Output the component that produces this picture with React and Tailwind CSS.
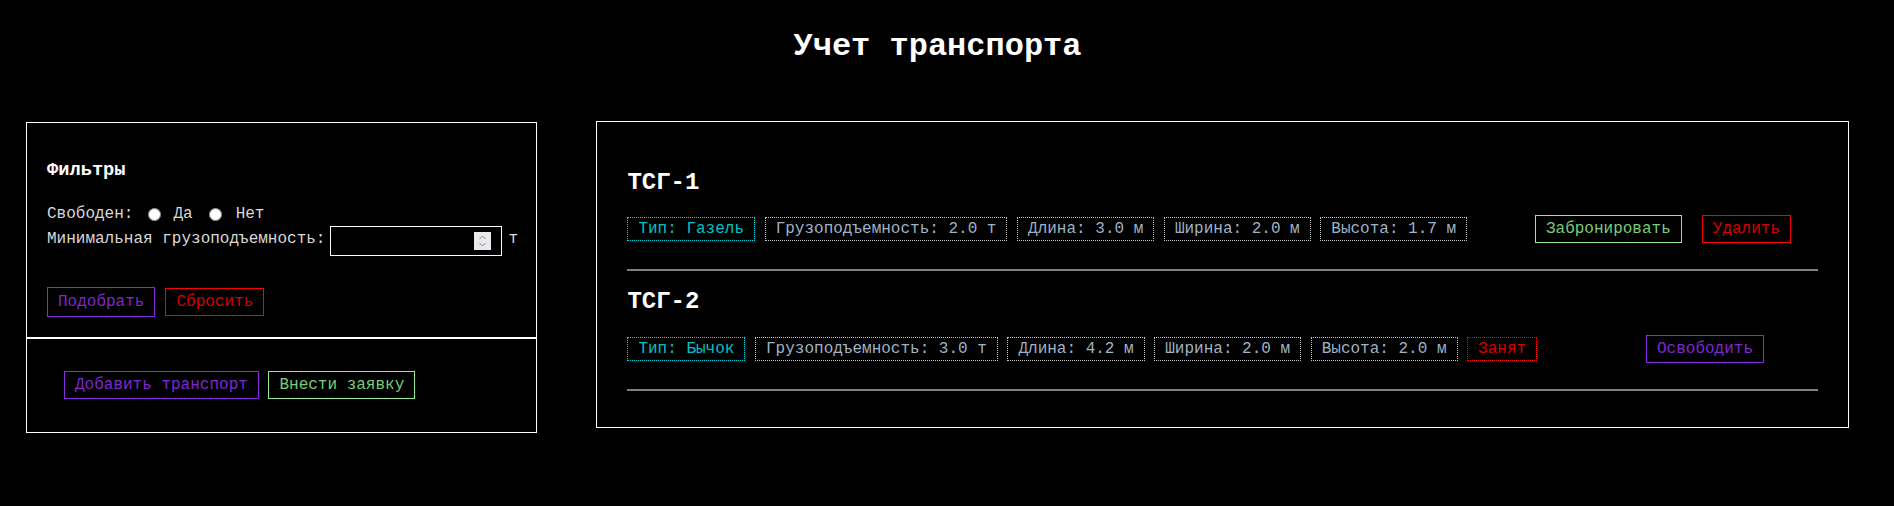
import React from "react";

function Chip({ children, tone = "grey" }) {
  const tones = {
    cyan: "border-[#00dce4] text-[#00c0c8]",
    grey: "border-[#c8c8c8] text-[#9fb3c6]",
    red: "border-[#ff0000] text-[#d80000]",
  };
  return (
    <span
      className={
        "border border-dotted px-[10px] py-[2px] leading-[normal] whitespace-pre " +
        tones[tone]
      }
    >
      {children}
    </span>
  );
}

function Btn({ children, tone, tall = false }) {
  const tones = {
    purple: "border-[#8a2be2] text-[#7f28d4]",
    red: "border-[#ff0000] text-[#d80000]",
    green: "border-[#90ee90] text-[#78cc78]",
  };
  return (
    <button
      className={
        "border px-[10px] leading-[normal] whitespace-pre text-[16px] " +
        (tall ? "py-[5px] " : "py-[4px] ") +
        tones[tone]
      }
    >
      {children}
    </button>
  );
}

function Spinner() {
  return (
    <div className="mr-[10px] flex h-[18px] w-[17px] items-center justify-center bg-[#e9e9ed]">
      <svg width="17" height="18" viewBox="0 0 17 18">
        <path d="M5.5 7 L8.5 4 L11.5 7" fill="none" stroke="#8a8a8a" strokeWidth="1" />
        <path d="M5.5 11 L8.5 14 L11.5 11" fill="none" stroke="#8a8a8a" strokeWidth="1" />
      </svg>
    </div>
  );
}

export default function App() {
  return (
    <div className="min-h-screen w-full bg-black font-['Liberation_Mono','Courier_New',monospace] leading-[normal] text-white">
      <div className="w-[1875px]">
        <h1 className="pt-[28px] text-center text-[32px] font-bold leading-[normal]">
          Учет транспорта
        </h1>

        <div className="mt-[56px] flex items-start gap-[59px] px-[26px] text-[16px]">
          {/* Left column */}
          <div className="mt-px w-[512px]">
            <div className="h-[216px] border border-white pl-[20px] pt-[36px]">
              <h3 className="text-[18.72px] font-bold leading-[normal]">Фильтры</h3>

              <div className="mt-[24px] flex h-[18px] items-center leading-[normal] text-[#d8d8d8]">
                <span>Свободен:</span>
                <input type="radio" name="free" className="ml-[15px] h-[13px] w-[13px]" />
                <span className="ml-[12px]">Да</span>
                <input type="radio" name="free" className="ml-[16px] h-[13px] w-[13px]" />
                <span className="ml-[14px]">Нет</span>
              </div>

              <div className="mt-[3px] flex h-[30px] items-center leading-[normal] text-[#d8d8d8]">
                <span className="mb-[4px]">Минимальная грузоподъемность:</span>
                <div className="ml-[5px] flex h-[30px] w-[172px] items-center border border-white bg-black">
                  <input type="number" className="min-w-0 flex-1 bg-transparent px-[2px] outline-none" />
                  <Spinner />
                </div>
                <span className="mb-[4px] ml-[6px]">т</span>
              </div>

              <div className="mt-[31px] flex items-center gap-[10px]">
                <Btn tone="purple" tall>
                  Подобрать
                </Btn>
                <Btn tone="red">Сбросить</Btn>
              </div>
            </div>

            <div className="h-[95px] border border-white pl-[37px] pt-[32px]">
              <div className="flex items-center gap-[9.6px]">
                <Btn tone="purple">Добавить транспорт</Btn>
                <Btn tone="green">Внести заявку</Btn>
              </div>
            </div>
          </div>

          {/* Right column */}
          <div className="w-[1254px] border border-white px-[30px] pt-[47px] pb-[36px]">
            <h2 className="text-[24px] font-bold leading-[normal]">ТСГ-1</h2>
            <div className="mt-[19px] flex items-center">
              <div className="flex items-center gap-[9.6px]">
                <Chip tone="cyan">Тип: Газель</Chip>
                <Chip>Грузоподъемность: 2.0 т</Chip>
                <Chip>Длина: 3.0 м</Chip>
                <Chip>Ширина: 2.0 м</Chip>
                <Chip>Высота: 1.7 м</Chip>
              </div>
              <div className="ml-auto mr-[27px] flex items-center gap-[20px]">
                <Btn tone="green">Забронировать</Btn>
                <Btn tone="red">Удалить</Btn>
              </div>
            </div>
            <div className="mt-[26px] h-[2px] bg-[#808080]" />

            <h2 className="mt-[17px] text-[24px] font-bold leading-[normal]">ТСГ-2</h2>
            <div className="mt-[20px] flex items-center">
              <div className="flex items-center gap-[9.6px]">
                <Chip tone="cyan">Тип: Бычок</Chip>
                <Chip>Грузоподъемность: 3.0 т</Chip>
                <Chip>Длина: 4.2 м</Chip>
                <Chip>Ширина: 2.0 м</Chip>
                <Chip>Высота: 2.0 м</Chip>
                <Chip tone="red">Занят</Chip>
              </div>
              <div className="ml-auto mr-[54px] flex items-center">
                <Btn tone="purple">Освободить</Btn>
              </div>
            </div>
            <div className="mt-[26px] h-[2px] bg-[#808080]" />
          </div>
        </div>
      </div>
    </div>
  );
}
